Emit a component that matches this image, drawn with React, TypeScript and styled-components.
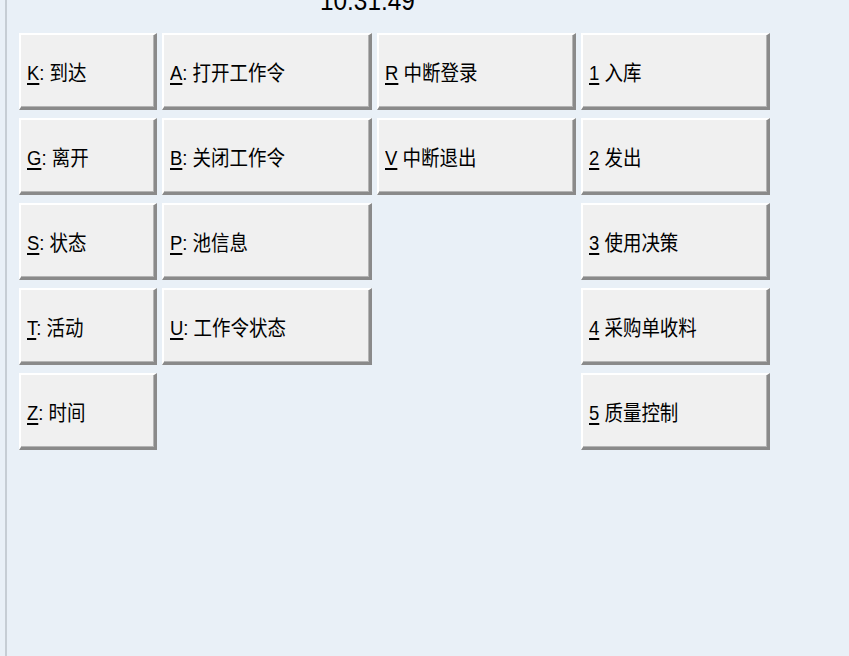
import React from "react";
import styled, { createGlobalStyle } from "styled-components";

const Global = createGlobalStyle`
  html, body { margin: 0; padding: 0; background: #e9f0f7; overflow: hidden; }
  body { font-family: "Liberation Sans", "Noto Sans CJK SC", sans-serif; }
`;

const Frame = styled.div`
  margin-left: 5px;
  height: 656px;
  border-left: 2px solid #c6cdd4;
  background: #e9f0f7;
  box-sizing: border-box;
  display: flex;
  flex-direction: column;
`;

const Clock = styled.div`
  margin-top: -13px;
  padding-left: 313px;
  height: 28px;
  font-family: "Liberation Sans", sans-serif;
  font-size: 28px;
  line-height: 28px;
  color: #000;
  white-space: nowrap;
`;

const ClockText = styled.span`
  display: inline-block;
  transform: scaleX(0.87);
  transform-origin: left center;
`;

const Grid = styled.div`
  margin-top: 18px;
  margin-left: 12px;
  display: grid;
  grid-template-columns: 138px 210px 199px 189px;
  grid-auto-rows: 77px;
  column-gap: 5px;
  row-gap: 8px;
`;

const Button = styled.button<{ $col: number; $row: number }>`
  grid-column: ${(p) => p.$col};
  grid-row: ${(p) => p.$row};
  box-sizing: border-box;
  margin: 0;
  padding: 0 0 0 6px;
  background: #f0f0f0;
  border-top: 2px solid #ffffff;
  border-left: 2px solid #ffffff;
  border-right: 3px solid #8a8a8a;
  border-bottom: 3px solid #8a8a8a;
  box-shadow: inset -1px -1px 0 #b4b4b4;
  display: flex;
  align-items: center;
  text-align: left;
  cursor: default;
  overflow: hidden;
`;

const Label = styled.span`
  display: inline-block;
  font-family: "Liberation Sans Narrow", "Liberation Sans", "Noto Sans CJK SC", sans-serif;
  font-size: 21px;
  color: #000;
  white-space: nowrap;
  transform: scaleX(0.88);
  transform-origin: left center;
`;

const Key = styled.span`
  text-decoration: underline;
  text-underline-offset: 3px;
`;

type Item = { key: string; sep: string; text: string; col: number; row: number };

const items: Item[] = [
  { key: "K", sep: ": ", text: "到达", col: 1, row: 1 },
  { key: "G", sep: ": ", text: "离开", col: 1, row: 2 },
  { key: "S", sep: ": ", text: "状态", col: 1, row: 3 },
  { key: "T", sep: ": ", text: "活动", col: 1, row: 4 },
  { key: "Z", sep: ": ", text: "时间", col: 1, row: 5 },
  { key: "A", sep: ": ", text: "打开工作令", col: 2, row: 1 },
  { key: "B", sep: ": ", text: "关闭工作令", col: 2, row: 2 },
  { key: "P", sep: ": ", text: "池信息", col: 2, row: 3 },
  { key: "U", sep: ": ", text: "工作令状态", col: 2, row: 4 },
  { key: "R", sep: " ", text: "中断登录", col: 3, row: 1 },
  { key: "V", sep: " ", text: "中断退出", col: 3, row: 2 },
  { key: "1", sep: " ", text: "入库", col: 4, row: 1 },
  { key: "2", sep: " ", text: "发出", col: 4, row: 2 },
  { key: "3", sep: " ", text: "使用决策", col: 4, row: 3 },
  { key: "4", sep: " ", text: "采购单收料", col: 4, row: 4 },
  { key: "5", sep: " ", text: "质量控制", col: 4, row: 5 },
];

export default function App() {
  return (
    <>
      <Global />
      <Frame>
        <Clock>
          <ClockText>10:31:49</ClockText>
        </Clock>
        <Grid>
          {items.map((it) => (
            <Button key={it.key} $col={it.col} $row={it.row}>
              <Label>
                <Key>{it.key}</Key>
                {it.sep}
                {it.text}
              </Label>
            </Button>
          ))}
        </Grid>
      </Frame>
    </>
  );
}
